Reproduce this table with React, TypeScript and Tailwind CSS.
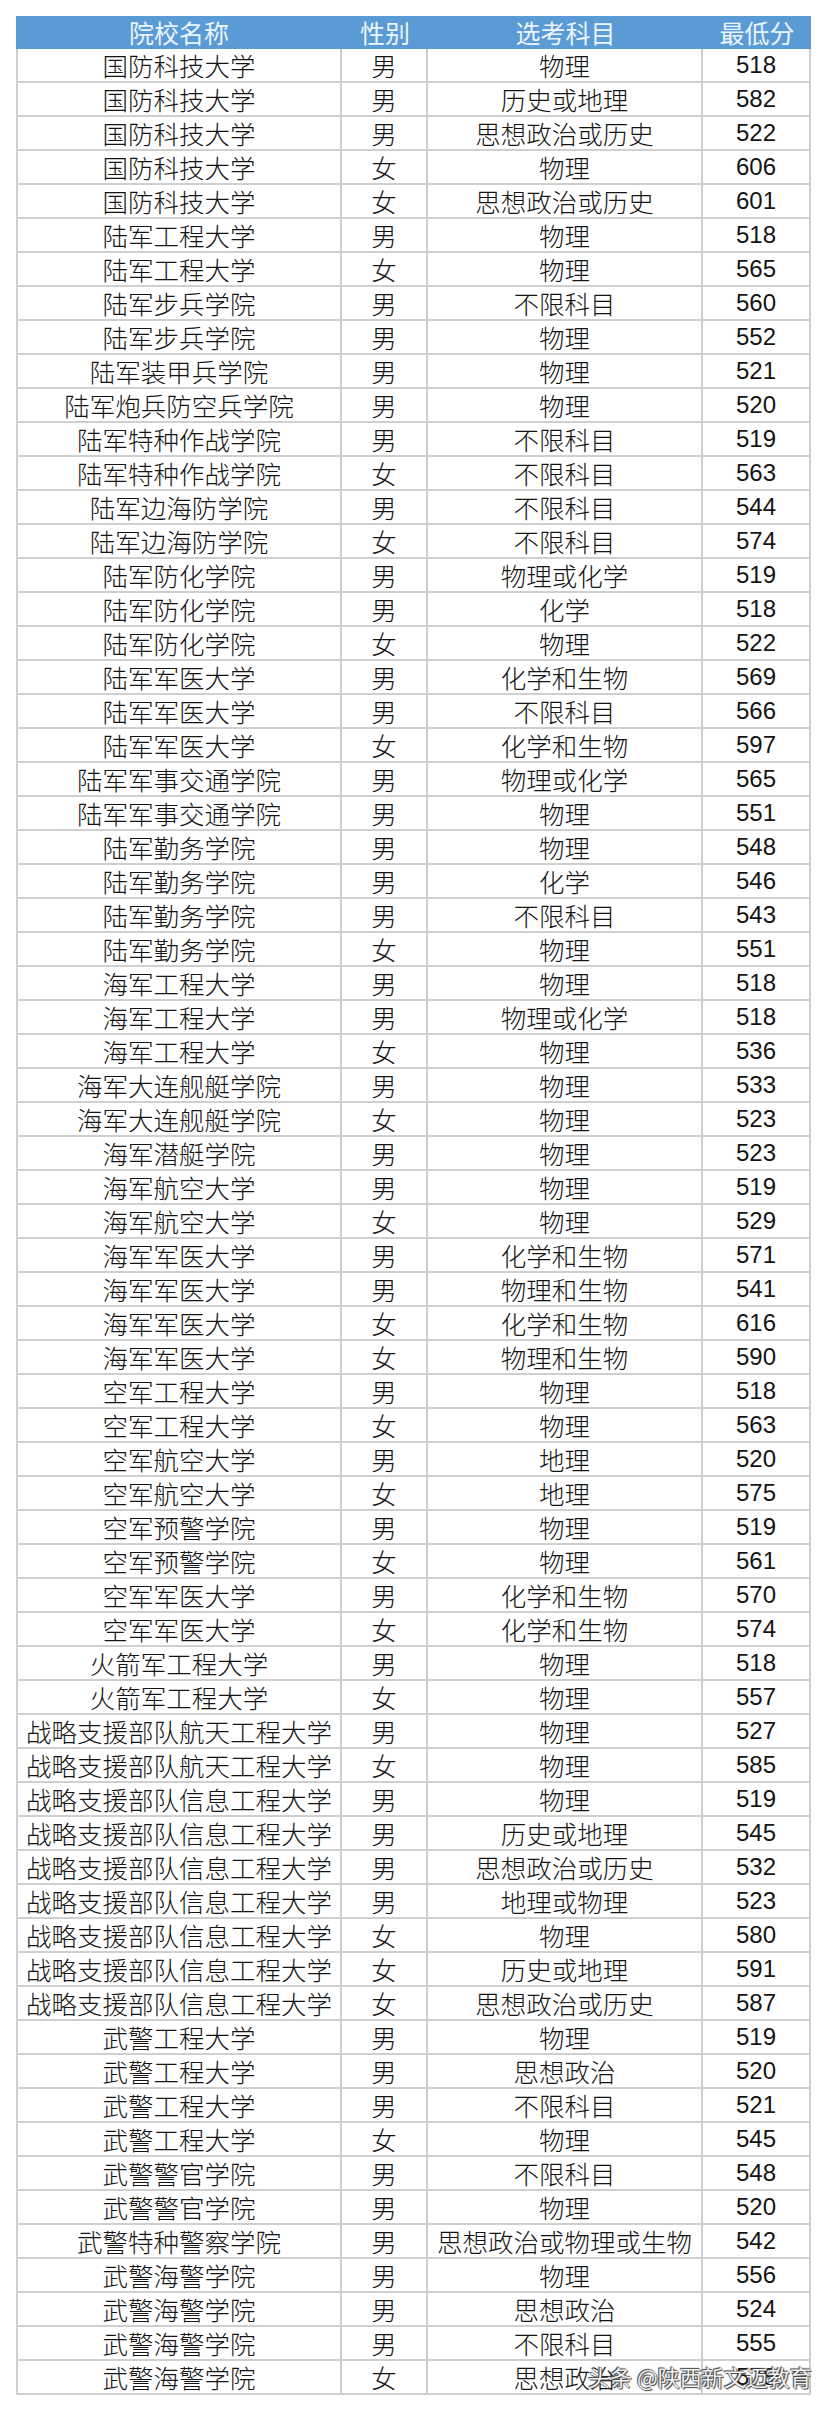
const ROWS: [string, string, string, string][] = [
  ['国防科技大学', '男', '物理', '518'],
  ['国防科技大学', '男', '历史或地理', '582'],
  ['国防科技大学', '男', '思想政治或历史', '522'],
  ['国防科技大学', '女', '物理', '606'],
  ['国防科技大学', '女', '思想政治或历史', '601'],
  ['陆军工程大学', '男', '物理', '518'],
  ['陆军工程大学', '女', '物理', '565'],
  ['陆军步兵学院', '男', '不限科目', '560'],
  ['陆军步兵学院', '男', '物理', '552'],
  ['陆军装甲兵学院', '男', '物理', '521'],
  ['陆军炮兵防空兵学院', '男', '物理', '520'],
  ['陆军特种作战学院', '男', '不限科目', '519'],
  ['陆军特种作战学院', '女', '不限科目', '563'],
  ['陆军边海防学院', '男', '不限科目', '544'],
  ['陆军边海防学院', '女', '不限科目', '574'],
  ['陆军防化学院', '男', '物理或化学', '519'],
  ['陆军防化学院', '男', '化学', '518'],
  ['陆军防化学院', '女', '物理', '522'],
  ['陆军军医大学', '男', '化学和生物', '569'],
  ['陆军军医大学', '男', '不限科目', '566'],
  ['陆军军医大学', '女', '化学和生物', '597'],
  ['陆军军事交通学院', '男', '物理或化学', '565'],
  ['陆军军事交通学院', '男', '物理', '551'],
  ['陆军勤务学院', '男', '物理', '548'],
  ['陆军勤务学院', '男', '化学', '546'],
  ['陆军勤务学院', '男', '不限科目', '543'],
  ['陆军勤务学院', '女', '物理', '551'],
  ['海军工程大学', '男', '物理', '518'],
  ['海军工程大学', '男', '物理或化学', '518'],
  ['海军工程大学', '女', '物理', '536'],
  ['海军大连舰艇学院', '男', '物理', '533'],
  ['海军大连舰艇学院', '女', '物理', '523'],
  ['海军潜艇学院', '男', '物理', '523'],
  ['海军航空大学', '男', '物理', '519'],
  ['海军航空大学', '女', '物理', '529'],
  ['海军军医大学', '男', '化学和生物', '571'],
  ['海军军医大学', '男', '物理和生物', '541'],
  ['海军军医大学', '女', '化学和生物', '616'],
  ['海军军医大学', '女', '物理和生物', '590'],
  ['空军工程大学', '男', '物理', '518'],
  ['空军工程大学', '女', '物理', '563'],
  ['空军航空大学', '男', '地理', '520'],
  ['空军航空大学', '女', '地理', '575'],
  ['空军预警学院', '男', '物理', '519'],
  ['空军预警学院', '女', '物理', '561'],
  ['空军军医大学', '男', '化学和生物', '570'],
  ['空军军医大学', '女', '化学和生物', '574'],
  ['火箭军工程大学', '男', '物理', '518'],
  ['火箭军工程大学', '女', '物理', '557'],
  ['战略支援部队航天工程大学', '男', '物理', '527'],
  ['战略支援部队航天工程大学', '女', '物理', '585'],
  ['战略支援部队信息工程大学', '男', '物理', '519'],
  ['战略支援部队信息工程大学', '男', '历史或地理', '545'],
  ['战略支援部队信息工程大学', '男', '思想政治或历史', '532'],
  ['战略支援部队信息工程大学', '男', '地理或物理', '523'],
  ['战略支援部队信息工程大学', '女', '物理', '580'],
  ['战略支援部队信息工程大学', '女', '历史或地理', '591'],
  ['战略支援部队信息工程大学', '女', '思想政治或历史', '587'],
  ['武警工程大学', '男', '物理', '519'],
  ['武警工程大学', '男', '思想政治', '520'],
  ['武警工程大学', '男', '不限科目', '521'],
  ['武警工程大学', '女', '物理', '545'],
  ['武警警官学院', '男', '不限科目', '548'],
  ['武警警官学院', '男', '物理', '520'],
  ['武警特种警察学院', '男', '思想政治或物理或生物', '542'],
  ['武警海警学院', '男', '物理', '556'],
  ['武警海警学院', '男', '思想政治', '524'],
  ['武警海警学院', '男', '不限科目', '555'],
  ['武警海警学院', '女', '思想政治', '578'],
];

const CJK = "font-['Noto_Sans_CJK_SC','Noto_Sans',sans-serif]";
const cell =
  'h-[34px] flex items-center justify-center border-r-2 border-b-2 border-[#cfcfcf] whitespace-nowrap leading-none';

export default function App() {
  return (
    <div className="bg-white h-[2411px] overflow-hidden pt-4 pl-4">
      <div className="w-[795px] flex flex-col">
        {/* Header */}
        <div className={`grid grid-cols-[326px_86px_275px_108px] h-[33px] shrink-0 bg-[#5b9bd5] text-[#eaf4fc] text-[25px] leading-none ${CJK}`}>
          <div className="flex items-center justify-center">院校名称</div>
          <div className="flex items-center justify-center">性别</div>
          <div className="flex items-center justify-center">选考科目</div>
          <div className="flex items-center justify-center">最低分</div>
        </div>

        {/* Rows */}
        {ROWS.map((r, i) => (
          <div key={i} className="relative grid grid-cols-[326px_86px_275px_108px] h-[34px] shrink-0 text-[#141414]">
            <div className={`${cell} border-l-2 text-[25.5px] font-light ${CJK}`}>{r[0]}</div>
            <div className={`${cell} text-[25.5px] font-light ${CJK}`}>{r[1]}</div>
            <div className={`${cell} text-[25.5px] font-light ${CJK}`}>{r[2]}</div>
            <div className={`${cell} text-[24px] font-['Liberation_Sans',Arial,sans-serif]`}>{r[3]}</div>
            {i === ROWS.length - 1 && (
              <div className={`absolute left-[572px] top-[4px] text-[22px] leading-none text-[#f2f2f2] whitespace-nowrap ${CJK} [text-shadow:0_0_1px_#333,1px_1px_1px_#444,-1px_-1px_1px_#444]`}>
                头条 @陕西新文迈教育
              </div>
            )}
          </div>
        ))}
      </div>
    </div>
  );
}
